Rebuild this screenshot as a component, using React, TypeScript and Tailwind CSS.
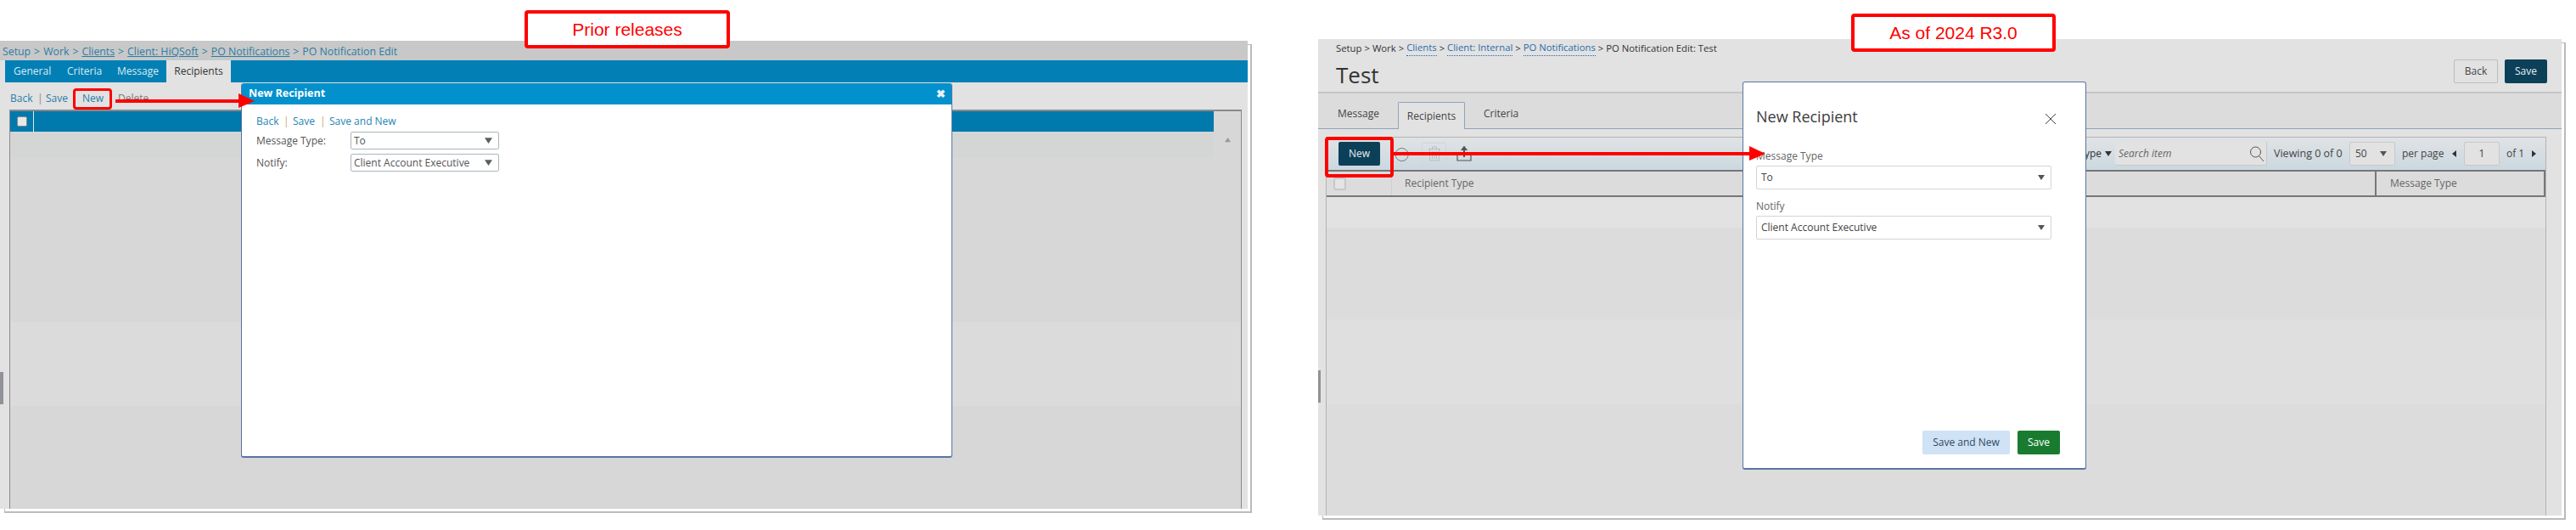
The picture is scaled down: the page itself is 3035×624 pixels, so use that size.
import React from "react";

const Caret = ({ dir = "down", size = 8, color = "#555" }: { dir?: "down" | "up" | "left" | "right"; size?: number; color?: string }) => {
  const points = {
    down: "0,1 8,1 4,7",
    up: "0,7 8,7 4,1",
    left: "6,0 6,8 1,4",
    right: "2,0 2,8 7,4",
  }[dir];
  return (
    <svg width={size} height={size} viewBox="0 0 8 8" className="shrink-0">
      <polygon points={points} fill={color} />
    </svg>
  );
};

const Arrow = ({ width, className }: { width: number; className: string }) => (
  <svg width={width} height="18" viewBox={`0 0 ${width} 18`} className={className}>
    <rect x="0" y="7" width={width - 16} height="4" fill="#fe0000" />
    <polygon points={`${width - 19},0 ${width},9 ${width - 19},17`} fill="#fe0000" />
  </svg>
);

const Callout = ({ label, className }: { label: string; className: string }) => (
  <div
    className={`absolute z-20 flex h-[45px] items-center justify-center rounded-[4px] border-4 border-[#fe0000] bg-white font-['Liberation_Sans',sans-serif] text-[21px] text-[#fe0000] ${className}`}
  >
    {label}
  </div>
);

const OldSelect = ({ value }: { value: string }) => (
  <div className="flex h-[21px] w-[175px] items-center justify-between rounded-[2px] border border-[#a9b6bf] pr-[7px] pl-[3px] text-[#555]">
    <span>{value}</span>
    <Caret size={9} color="#5c5c5c" />
  </div>
);

const OldRelease = () => (
  <div className="ml-[5px] mt-[52px] h-[552px] w-[1470px] shrink-0 border-t border-r-2 border-b-2 border-l border-[#bbbbbb]">
    <div className="relative -mt-[5px] -ml-[6px] flex h-[551px] w-[1470px] flex-col bg-[#e2e2e2] text-[12px]">
      <div className="flex h-[23px] shrink-0 items-center gap-[4px] bg-[#c8c8c8] pl-[3px] pt-[4px] text-[12.300px] text-[#2b7ca5]">
        <span>Setup</span><span>&gt;</span><span>Work</span><span>&gt;</span>
        <span className="underline">Clients</span><span>&gt;</span>
        <span className="underline">Client: HiQSoft</span><span>&gt;</span>
        <span className="underline">PO Notifications</span><span>&gt;</span>
        <span>PO Notification Edit</span>
      </div>
      <div className="ml-[6px] flex h-[26px] shrink-0 items-center bg-[#0280b6] pl-[10px] text-[#dbe9f0]">
        <span className="w-[63px]">General</span>
        <span className="w-[59px]">Criteria</span>
        <span className="w-[58px]">Message</span>
        <span className="flex h-full w-[76px] items-center justify-center bg-[#e2e2e2] text-[#333]">Recipients</span>
      </div>
      <div className="flex h-[32px] shrink-0 items-center pl-[12px] pt-[6px] text-[#2a7ca8]">
        <span className="w-[32px]">Back</span>
        <span className="w-[10px] text-[#888]">|</span>
        <span className="w-[43px]">Save</span>
        <span className="w-[42px]">New</span>
        <span className="text-[#777]">Delete</span>
      </div>
      <div className="ml-[11px] mr-[7px] flex min-h-0 flex-1 flex-col border-t-2 border-r border-l border-[#8a8a8a] bg-[#d7d7d7]">
        <div className="flex shrink-0">
          <div className="flex-1">
            <div className="flex h-[24px] bg-[#0079ad]">
              <div className="flex w-[28px] items-center justify-center border-r border-[#dfe9ee]">
                <div className="h-[12px] w-[12px] rounded-[2px] border border-[#888] bg-[#e8e8e8]" />
              </div>
            </div>
            <div className="h-[31px] bg-[#d4d6d5]" />
          </div>
          <div className="flex w-[32px] justify-center pt-[30px]">
            <Caret dir="up" size={7} color="#999" />
          </div>
        </div>
        <div className="mt-[193px] h-[99px] shrink-0 bg-[#dbdbdb]" />
      </div>
      <div className="absolute left-0 top-[390px] h-[38px] w-[4px] bg-[#8f9296]" />

      <div className="absolute left-[284px] top-[50px] z-10 flex h-[441px] w-[838px] flex-col overflow-hidden rounded-[3px] border-b-2 border-l border-r border-[#5a74a3] bg-white">
        <div className="flex h-[25px] shrink-0 items-center justify-between bg-[#0291cc] pl-[8px] pr-[7px] text-[12.500px] font-bold text-white">
          <span>New Recipient</span>
          <span className="text-[13px] leading-none text-[#e8f3f8]">✖</span>
        </div>
        <div className="flex items-center pl-[17px] pt-[11px] text-[#2486b4]">
          <span className="w-[32px]">Back</span><span className="w-[11px] text-[#c8a86c]">|</span>
          <span className="w-[32px]">Save</span><span className="w-[11px] text-[#c8a86c]">|</span>
          <span>Save and New</span>
        </div>
        <div className="mt-[3px] flex items-center pl-[17px] text-[#555]">
          <span className="w-[111px]">Message Type:</span>
          <OldSelect value="To" />
        </div>
        <div className="mt-[5px] flex items-center pl-[17px] text-[#555]">
          <span className="w-[111px]">Notify:</span>
          <OldSelect value="Client Account Executive" />
        </div>
      </div>
      <Arrow width={164} className="absolute left-[136px] top-[62px] z-20" />
      <div className="absolute left-[86px] top-[56px] z-20 h-[25px] w-[46px] rounded-[4px] border-[3px] border-[#fe0000]" />
    </div>
  </div>
);

const NewSelect = ({ value }: { value: string }) => (
  <div className="flex h-[28px] w-[348px] items-center justify-between rounded-[2px] border border-[#d4d4d4] pr-[7px] pl-[5px] text-[12px] text-[#444]">
    <span>{value}</span>
    <Caret size={8} color="#555" />
  </div>
);

const NewRelease = () => (
  <div className="ml-[83px] mt-[50px] h-[562px] w-[1465px] shrink-0 border-t border-r-2 border-b-2 border-l border-[#bbbbbb]">
    <div className="relative -mt-[5px] -ml-[6px] flex h-[561px] w-[1465px] flex-col bg-[#e2e2e2] text-[12px] text-[#444]">
      <div className="flex h-[62px] shrink-0 items-start justify-between pl-[21px] pr-[17px]">
        <div>
          <div className="flex h-[22px] items-center gap-[3px] text-[11.300px] text-[#333]">
            <span>Setup</span><span>&gt;</span><span>Work</span><span>&gt;</span>
            <span className="border-b border-dotted border-[#2466a8] text-[#2b6ca8]">Clients</span><span>&gt;</span>
            <span className="border-b border-dotted border-[#2466a8] text-[#2b6ca8]">Client: Internal</span><span>&gt;</span>
            <span className="border-b border-dotted border-[#2466a8] text-[#2b6ca8]">PO Notifications</span><span>&gt;</span>
            <span>PO Notification Edit: Test</span>
          </div>
          <div className="mt-[1px] text-[26px] leading-[38px] text-[#333]">Test</div>
        </div>
        <div className="mt-[24px] flex gap-[8px]">
          <div className="flex h-[28px] w-[52px] items-center justify-center rounded-[2px] border border-[#bdbdbd] text-[#444]">Back</div>
          <div className="flex h-[28px] w-[50px] items-center justify-center rounded-[2px] bg-[#0c4058] text-[#e8eef1]">Save</div>
        </div>
      </div>
      <div className="flex h-[44px] shrink-0 items-end border-t-2 border-b border-t-[#c6c6c6] border-b-[#8fa3bb] bg-[#dcdcdc] pl-[23px]">
        <span className="flex h-[32px] w-[71px] items-center pb-[2px]">Message</span>
        <span className="-mb-px flex h-[32px] w-[79px] items-center justify-center rounded-t-[2px] border border-b-0 border-[#8fa3bb] bg-[#e2e2e2] font-medium">Recipients</span>
        <span className="flex h-[32px] items-center pb-[2px] pl-[22px]">Criteria</span>
      </div>
      <div className="ml-[9px] mr-[18px] mt-[9px] flex min-h-0 flex-1 flex-col border-x border-t border-[#b3b3b3]">
        <div className="flex h-[40px] shrink-0 items-center border-b-2 border-[#777] bg-gradient-to-b from-[#e0e3e5] to-[#cbd8e0] pl-[14px]">
          <div className="flex h-[28px] w-[49px] items-center justify-center rounded-[2px] bg-[#0c4058] text-[#e8eef1]">New</div>
          <svg width="20" height="20" viewBox="0 0 20 20" fill="none" stroke="#777" strokeWidth="1" className="ml-[16px]">
            <path d="M16.500 8A7.500 7.500 0 1 0 17 12.500" />
            <path d="M14.500 9.500h4l-2 2.500z" fill="#777" />
          </svg>
          <div className="ml-[13px] flex h-[26px] w-[29px] items-center justify-center rounded-[2px] border border-[#d3d6d8]">
            <svg width="16" height="18" viewBox="0 0 16 18" fill="none" stroke="#b9bec2" strokeWidth="1">
              <path d="M1 3.500h14M5.500 3.500V1h5v2.500M2.500 3.500v13.500h11V3.500M5.500 6v9M8 6v9M10.500 6v9" />
            </svg>
          </div>
          <svg width="18" height="18" viewBox="0 0 18 18" fill="none" stroke="#555" strokeWidth="1.200" className="ml-[12px]">
            <path d="M1 7.500h5M12 7.500h5V17H1V7.500" />
            <path d="M9 13V2" strokeWidth="2" />
            <path d="M6 4.500 9 0.500l3 4z" fill="#555" />
          </svg>
          <div className="ml-auto flex items-center pr-[10px]">
            <span className="text-[#333]">Recipient Type</span>
            <span className="ml-[4px]"><Caret size={8} color="#333" /></span>
            <div className="ml-[4px] flex h-[28px] w-[179px] items-center justify-between rounded-[2px] border-b border-r border-[#c8c8c8] bg-[#e2e2e2] pl-[4px] pr-[2px]">
              <span className="text-[12px] italic text-[#666]">Search item</span>
              <svg width="18" height="20" viewBox="0 0 18 20" fill="none" stroke="#555" strokeWidth="1">
                <circle cx="7.500" cy="8" r="6" />
                <path d="M11.500 12.500 17 19" />
              </svg>
            </div>
            <span className="ml-[8px] w-[82px] text-[12.500px]">Viewing 0 of 0</span>
            <div className="ml-[7px] flex h-[28px] w-[54px] items-center justify-between rounded-[2px] border border-[#c8c8c8] bg-[#e2e2e2] pl-[6px] pr-[9px]">
              <span>50</span>
              <Caret size={8} color="#555" />
            </div>
            <span className="ml-[8px] w-[50px]">per page</span>
            <span className="ml-[8px]"><Caret dir="left" size={8} color="#333" /></span>
            <div className="ml-[7px] flex h-[28px] w-[42px] items-center justify-center rounded-[2px] border border-[#c8c8c8] bg-[#e2e2e2]">1</div>
            <span className="ml-[8px] w-[22px]">of 1</span>
            <span className="ml-[6px]"><Caret dir="right" size={8} color="#333" /></span>
          </div>
        </div>
        <div className="flex h-[30px] shrink-0 border-b-2 border-[#777] bg-[#dcdcdc] text-[#666]">
          <div className="flex w-[77px] items-center border-r border-[#cfcfcf] pl-[8px]">
            <div className="h-[15px] w-[15px] rounded-[2px] border-2 border-[#c8c8c8] bg-[#e4e4e4]" />
          </div>
          <div className="flex flex-1 items-center pl-[15px]">Recipient Type</div>
          <div className="flex w-[201px] items-center border-x-2 border-[#777] pl-[16px]">Message Type</div>
        </div>
        <div className="h-[36px] shrink-0 bg-[#e2e2e2]" />
        <div className="flex flex-1 flex-col bg-[#dcdcdc] pt-[108px]">
          <div className="h-[100px] bg-[#dfdfdf]" />
        </div>
      </div>
      <div className="absolute left-0 top-[390px] h-[38px] w-[3px] bg-[#8f9296]" />

      <div className="absolute left-[500px] top-[50px] z-10 flex h-[457px] w-[405px] flex-col rounded-[3px] border border-b-2 border-[#5a74a3] bg-white px-[15px]">
        <div className="mt-[26px] flex items-center justify-between pr-[1px] text-[18px] leading-[28px] text-[#3d3d3d]">
          <span>New Recipient</span>
          <svg width="14" height="14" viewBox="0 0 14 14" stroke="#444" strokeWidth="1" className="mt-[6px] mr-[18px]">
            <path d="M1 1l12 12M13 1 1 13" />
          </svg>
        </div>
        <div className="mt-[24px] text-[12px] leading-[18px] text-[#666]">Message Type</div>
        <div className="mt-[2px]"><NewSelect value="To" /></div>
        <div className="mt-[11px] text-[12px] leading-[18px] text-[#666]">Notify</div>
        <div className="mt-[2px]"><NewSelect value="Client Account Executive" /></div>
        <div className="mt-auto mb-[16px] flex justify-end gap-[9px] pr-[15px]">
          <div className="flex h-[28px] w-[103px] items-center justify-center rounded-[2px] bg-[#cfe2f6] text-[#2f4a5f]">Save and New</div>
          <div className="flex h-[28px] w-[50px] items-center justify-center rounded-[2px] bg-[#197b30] text-white">Save</div>
        </div>
      </div>
      <Arrow width={438} className="absolute left-[89px] top-[126px] z-20" />
      <div className="absolute left-[8px] top-[115px] z-20 h-[48px] w-[81px] rounded-[4px] border-4 border-[#fe0000]" />
    </div>
  </div>
);

export default function App() {
  return (
    <div className="relative flex h-[624px] w-[3035px] items-start overflow-hidden bg-white font-['Open_Sans',sans-serif]">
      <OldRelease />
      <NewRelease />
      <Callout label="Prior releases" className="left-[618px] top-[12px] w-[242px]" />
      <Callout label="As of 2024 R3.0" className="left-[2181px] top-[16px] w-[241px]" />
    </div>
  );
}
